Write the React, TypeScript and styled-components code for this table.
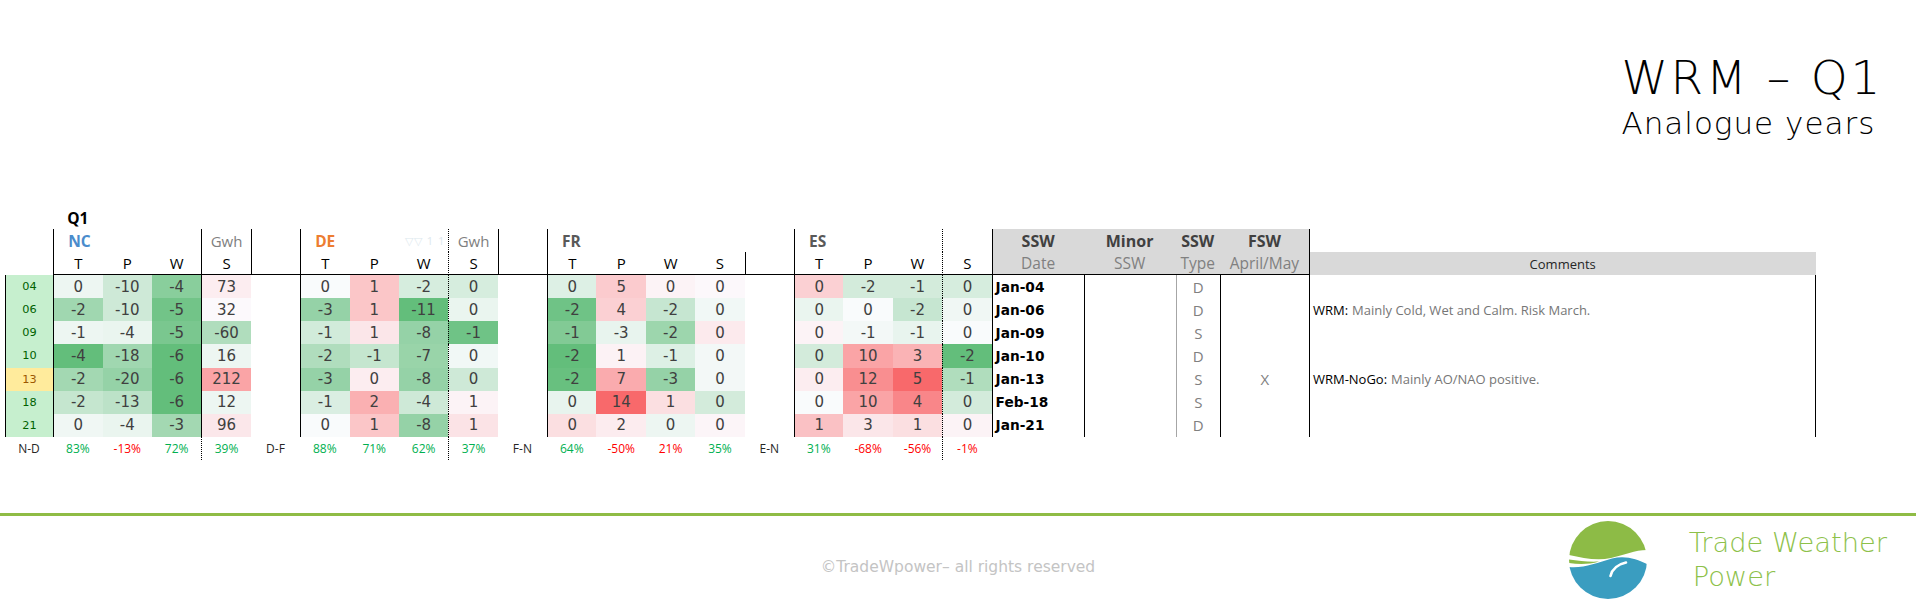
import styled, { createGlobalStyle } from "styled-components";

const GlobalStyle = createGlobalStyle`
  html, body {
    margin: 0;
    padding: 0;
    background: #ffffff;
  }
  body {
    font-family: "Open Sans", "Liberation Sans", sans-serif;
  }
`;

type Line = "solid" | "dotted" | "gray" | undefined;
type Zone = "q" | "h1" | "h2" | "d" | "p";

const GREEN = [99, 190, 123];
const WHITE = [252, 252, 255];
const RED = [248, 105, 107];

// negative = green scale, positive = red scale (Excel 3-colour scale look)
function heat(v: number) {
  const t = Math.min(Math.abs(v), 1);
  const to = v < 0 ? GREEN : RED;
  const c = WHITE.map((w, i) => Math.round(w + (to[i] - w) * t));
  return `rgb(${c.join(",")})`;
}

const lineCss = (l: Line) =>
  l === "solid"
    ? "1px solid #000"
    : l === "dotted"
    ? "1px dotted #000"
    : l === "gray"
    ? "1px solid #a6a6a6"
    : "none";

const countries = [
  {
    code: "NC",
    tone: "#4a8ccc",
    span: "N-D",
    gwh: true,
    values: [
      [0, -10, -4, 73],
      [-2, -10, -5, 32],
      [-1, -4, -5, -60],
      [-4, -18, -6, 16],
      [-2, -20, -6, 212],
      [-2, -13, -6, 12],
      [0, -4, -3, 96],
    ],
    heat: [
      [-0.1, -0.3, -0.75, 0.1],
      [-0.6, -0.3, -0.9, 0.02],
      [-0.1, -0.12, -0.85, -0.5],
      [-1, -0.6, -1, -0.1],
      [-0.58, -0.67, -1, 0.6],
      [-0.36, -0.42, -1, -0.1],
      [-0.08, -0.12, -0.58, 0.14],
    ],
    pct: ["83%", "-13%", "72%", "39%"],
    neg: [false, true, false, false],
  },
  {
    code: "DE",
    tone: "#ed7d31",
    span: "D-F",
    gwh: true,
    values: [
      [0, 1, -2, 0],
      [-3, 1, -11, 0],
      [-1, 1, -8, -1],
      [-2, -1, -7, 0],
      [-3, 0, -8, 0],
      [-1, 2, -4, 1],
      [0, 1, -8, 1],
    ],
    heat: [
      [-0.02, 0.37, -0.25, -0.25],
      [-0.67, 0.37, -1, -0.12],
      [-0.28, 0.15, -0.67, -0.92],
      [-0.5, -0.36, -0.65, -0.07],
      [-0.67, 0.1, -0.67, -0.3],
      [-0.22, 0.52, -0.3, 0.06],
      [-0.02, 0.37, -0.67, 0.17],
    ],
    pct: ["88%", "71%", "62%", "37%"],
    neg: [false, false, false, false],
  },
  {
    code: "FR",
    tone: "#595959",
    span: "F-N",
    gwh: false,
    values: [
      [0, 5, 0, 0],
      [-2, 4, -2, 0],
      [-1, -3, -2, 0],
      [-2, 1, -1, 0],
      [-2, 7, -3, 0],
      [0, 14, 1, 0],
      [0, 2, 0, 0],
    ],
    heat: [
      [-0.2, 0.33, 0.06, 0.03],
      [-0.92, 0.3, -0.35, -0.07],
      [-0.8, -0.13, -0.62, 0.12],
      [-1, 0.07, -0.2, -0.06],
      [-0.97, 0.55, -0.67, -0.06],
      [-0.13, 1, 0.2, -0.27],
      [0.2, 0.11, -0.1, 0.05],
    ],
    pct: ["64%", "-50%", "21%", "35%"],
    neg: [false, true, true, false],
  },
  {
    code: "ES",
    tone: "#595959",
    span: "E-N",
    gwh: false,
    values: [
      [0, -2, -1, 0],
      [0, 0, -2, 0],
      [0, -1, -1, 0],
      [0, 10, 3, -2],
      [0, 12, 5, -1],
      [0, 10, 4, 0],
      [1, 3, 1, 0],
    ],
    heat: [
      [0.3, -0.27, -0.27, -0.25],
      [-0.12, -0.02, -0.35, -0.08],
      [0.06, -0.06, -0.13, -0.02],
      [-0.27, 0.6, 0.5, -1],
      [0.1, 0.75, 1, -0.5],
      [-0.02, 0.6, 0.8, -0.27],
      [0.4, 0.15, 0.2, 0.06],
    ],
    pct: ["31%", "-68%", "-56%", "-1%"],
    neg: [false, true, true, true],
  },
];

const years = ["04", "06", "09", "10", "13", "18", "21"];
const dates = ["Jan-04", "Jan-06", "Jan-09", "Jan-10", "Jan-13", "Feb-18", "Jan-21"];
const types = ["D", "D", "S", "D", "S", "S", "D"];
const fsw = ["", "", "", "", "X", "", ""];
const comments: Record<number, [string, string]> = {
  1: ["WRM:", "Mainly Cold, Wet and Calm. Risk March."],
  4: ["WRM-NoGo:", "Mainly AO/NAO positive."],
};
const sswHead = [
  ["SSW", "Date"],
  ["Minor", "SSW"],
  ["SSW", "Type"],
  ["FSW", "April/May"],
];
const measures = ["T", "P", "W", "S"];

type Col =
  | { kind: "year" }
  | { kind: "val"; ci: number; mi: number }
  | { kind: "gap"; ci: number }
  | { kind: "ssw"; i: number }
  | { kind: "comment" };

const COLUMNS: Col[] = [
  { kind: "year" },
  ...countries.flatMap((_, ci) => [
    ...measures.map((__, mi) => ({ kind: "val" as const, ci, mi })),
    ...(ci < 3 ? [{ kind: "gap" as const, ci }] : []),
  ]),
  ...sswHead.map((_, i) => ({ kind: "ssw" as const, i })),
  { kind: "comment" },
];

function leftLine(col: number, zone: Zone): Line {
  const head = zone === "h1" || zone === "h2";
  const body = head || zone === "d";
  if (col === 0) return zone === "d" ? "solid" : undefined;
  if ([1, 6, 11, 16].includes(col)) return body ? "solid" : undefined;
  if (col === 4) return body ? "solid" : zone === "p" ? "dotted" : undefined;
  if (col === 9 || col === 19) return zone === "q" ? undefined : "dotted";
  if (col === 5 || col === 10) return head ? "solid" : undefined;
  if (col === 15) return zone === "h2" ? "solid" : undefined;
  if (col === 20 || col === 24) return body ? "solid" : undefined;
  if (col === 21 || col === 23) return zone === "d" ? "solid" : undefined;
  if (col === 22) return zone === "d" ? "gray" : undefined;
  return undefined;
}

const Page = styled.div`
  width: 1916px;
  height: 611px;
  overflow: hidden;
  display: flex;
  flex-direction: column;
`;

const TitleBar = styled.header`
  height: 206px;
  box-sizing: border-box;
  padding: 50px 33px 0 0;
  display: flex;
  justify-content: flex-end;
`;

const TitleBlock = styled.div`
  font-family: "DejaVu Sans", sans-serif;
  font-weight: 200;
  color: #000;
`;

const TitleMain = styled.div`
  font-size: 47px;
  line-height: 55px;
  letter-spacing: 2.7px;
`;

const TitleSub = styled.div`
  font-size: 31px;
  line-height: 36px;
  letter-spacing: 1px;
`;

const Sheet = styled.div`
  display: grid;
  grid-template-columns: 48.5px repeat(19, 49.4px) 92px 92px 44.3px 89px 506.6px;
  grid-template-rows: 23px 23px 23px repeat(7, 23.14px) 23px;
  margin-left: 4.7px;
`;

const Cell = styled.div<{ $left?: Line; $right?: Line; $under?: boolean; $fill?: string }>`
  box-sizing: border-box;
  min-width: 0;
  display: flex;
  align-items: center;
  justify-content: center;
  white-space: nowrap;
  border-left: ${(p) => lineCss(p.$left)};
  border-right: ${(p) => lineCss(p.$right)};
  border-bottom: ${(p) => (p.$under ? "1px solid #000" : "none")};
  background: ${(p) => p.$fill ?? "transparent"};
`;

const Label = styled(Cell)<{ $tone: string }>`
  justify-content: flex-start;
  padding-left: 14px;
  font-weight: 700;
  font-size: 15.5px;
  color: ${(p) => p.$tone};
`;

const Unit = styled(Cell)`
  font-size: 15px;
  color: #808080;
`;

const Ghost = styled(Cell)`
  justify-content: flex-end;
  padding-right: 3px;
  font-size: 11px;
  letter-spacing: 1px;
  color: #dde8ee;
`;

const Letter = styled(Cell)`
  font-size: 15px;
  color: #000;
`;

const Value = styled(Cell)`
  font-family: "DejaVu Sans", sans-serif;
  font-size: 15px;
  color: #404040;
`;

const Year = styled(Cell)<{ $neutral?: boolean }>`
  font-family: "DejaVu Sans", sans-serif;
  font-size: 11.3px;
  background: ${(p) => (p.$neutral ? "#ffeb9c" : "#c6efce")};
  color: ${(p) => (p.$neutral ? "#9c5700" : "#006100")};
`;

const Span = styled(Cell)`
  font-size: 12px;
  color: #262626;
`;

const Pct = styled(Cell)<{ $neg: boolean }>`
  font-size: 12px;
  color: ${(p) => (p.$neg ? "#ff0000" : "#00b050")};
`;

const SswHead = styled(Cell)<{ $sub?: boolean }>`
  background: #d9d9d9;
  font-size: ${(p) => (p.$sub ? "15.5px" : "16px")};
  font-weight: ${(p) => (p.$sub ? 400 : 700)};
  color: ${(p) => (p.$sub ? "#808080" : "#404040")};
`;

const CommentHead = styled(Cell)`
  background: #d9d9d9;
  font-size: 13px;
  color: #262626;
`;

const DateCell = styled(Cell)`
  justify-content: flex-start;
  padding-left: 3px;
  font-family: "DejaVu Sans", sans-serif;
  font-weight: 700;
  font-size: 13.7px;
  color: #000;
`;

const TypeCell = styled(Cell)`
  font-size: 15px;
  color: #808080;
`;

const Comment = styled(Cell)`
  justify-content: flex-start;
  padding-left: 3px;
  font-size: 13px;
  color: #767676;
  b {
    font-weight: 400;
    color: #000;
    margin-right: 4px;
  }
`;

const Footer = styled.footer`
  margin-top: 53px;
  border-top: 3px solid #8fbc45;
  height: 95px;
  display: grid;
  grid-template-columns: 1fr auto 1fr;
  align-items: center;
`;

const Copyright = styled.div`
  grid-column: 2;
  padding-top: 7px;
  font-family: "DejaVu Sans", sans-serif;
  font-size: 15.5px;
  color: #c4c4c4;
`;

const Brand = styled.div`
  grid-column: 3;
  justify-self: end;
  display: flex;
  align-items: center;
  gap: 42px;
  padding: 0 29px 6px 0;
`;

const BrandName = styled.div`
  font-family: "DejaVu Sans", sans-serif;
  font-weight: 200;
  font-size: 27.3px;
  line-height: 34px;
  color: #8dc14a;
  span {
    display: block;
    padding-left: 4px;
  }
`;

function Logo() {
  return (
    <svg width="78" height="78" viewBox="0 0 78 78">
      <defs>
        <clipPath id="twp-disc">
          <circle cx="39" cy="39" r="39" />
        </clipPath>
      </defs>
      <g clipPath="url(#twp-disc)">
        <rect width="78" height="78" fill="#ffffff" />
        <path d="M0 0 H78 V29 C66 29 55 34 42 37 C28 40 14 37 0 34 Z" fill="#8dbb46" />
        <path d="M0 38.5 C10 40 20 41 30 40.5 C20 43.5 10 43.5 0 42 Z" fill="#8dbb46" />
        <path d="M0 46 C14 47.5 28 42 43 37.5 C56 34 68 38 78 43 V78 H0 Z" fill="#3a9dc0" />
        <path
          d="M41.5 55 C43 48.5 48 43.5 57 41.5"
          stroke="#ffffff"
          strokeWidth="2.6"
          strokeLinecap="round"
          fill="none"
        />
      </g>
    </svg>
  );
}

function renderCell(zone: Zone, r: number, c: number) {
  const col = COLUMNS[c];
  const key = `${zone}-${r}-${c}`;
  const left = leftLine(c, zone);
  const under = zone === "h2" && c >= 1 && c <= 23;
  const right: Line = col.kind === "comment" && zone === "d" ? "solid" : undefined;

  if (zone === "q") {
    if (c === 1) return <Label key={key} $tone="#000">Q1</Label>;
    return <Cell key={key} />;
  }

  if (zone === "h1") {
    if (col.kind === "val") {
      const ct = countries[col.ci];
      if (col.mi === 0)
        return (
          <Label key={key} $left={left} $tone={ct.tone}>
            {ct.code}
          </Label>
        );
      if (col.mi === 3 && ct.gwh)
        return (
          <Unit key={key} $left={left}>
            Gwh
          </Unit>
        );
      if (col.mi === 2 && col.ci === 1)
        return (
          <Ghost key={key} $left={left}>
            ▽▽ 1 1
          </Ghost>
        );
    }
    if (col.kind === "ssw")
      return (
        <SswHead key={key} $left={left}>
          {sswHead[col.i][0]}
        </SswHead>
      );
    return <Cell key={key} $left={left} />;
  }

  if (zone === "h2") {
    if (col.kind === "val")
      return (
        <Letter key={key} $left={left} $under={under}>
          {measures[col.mi]}
        </Letter>
      );
    if (col.kind === "ssw")
      return (
        <SswHead key={key} $sub $left={left} $under={under}>
          {sswHead[col.i][1]}
        </SswHead>
      );
    if (col.kind === "comment")
      return (
        <CommentHead key={key} $left={left}>
          Comments
        </CommentHead>
      );
    return <Cell key={key} $left={left} $under={under} />;
  }

  if (zone === "d") {
    if (col.kind === "year")
      return (
        <Year key={key} $left={left} $neutral={years[r] === "13"}>
          {years[r]}
        </Year>
      );
    if (col.kind === "val") {
      const ct = countries[col.ci];
      return (
        <Value key={key} $left={left} $fill={heat(ct.heat[r][col.mi])}>
          {ct.values[r][col.mi]}
        </Value>
      );
    }
    if (col.kind === "ssw") {
      if (col.i === 0)
        return (
          <DateCell key={key} $left={left}>
            {dates[r]}
          </DateCell>
        );
      if (col.i === 2)
        return (
          <TypeCell key={key} $left={left}>
            {types[r]}
          </TypeCell>
        );
      if (col.i === 3)
        return (
          <TypeCell key={key} $left={left}>
            {fsw[r]}
          </TypeCell>
        );
      return <Cell key={key} $left={left} />;
    }
    if (col.kind === "comment") {
      const note = comments[r];
      return (
        <Comment key={key} $left={left} $right={right}>
          {note && (
            <>
              <b>{note[0]}</b>
              {note[1]}
            </>
          )}
        </Comment>
      );
    }
    return <Cell key={key} $left={left} />;
  }

  // percentage row
  if (col.kind === "year")
    return (
      <Span key={key} $left={left}>
        {countries[0].span}
      </Span>
    );
  if (col.kind === "gap")
    return (
      <Span key={key} $left={left}>
        {countries[col.ci + 1].span}
      </Span>
    );
  if (col.kind === "val") {
    const ct = countries[col.ci];
    return (
      <Pct key={key} $left={left} $neg={ct.neg[col.mi]}>
        {ct.pct[col.mi]}
      </Pct>
    );
  }
  return <Cell key={key} $left={left} />;
}

const zones: [Zone, number][] = [
  ["q", 0],
  ["h1", 0],
  ["h2", 0],
  ...years.map((_, i) => ["d", i] as [Zone, number]),
  ["p", 0],
];

export default function App() {
  return (
    <>
      <GlobalStyle />
      <Page>
        <TitleBar>
          <TitleBlock>
            <TitleMain>WRM – Q1</TitleMain>
            <TitleSub>Analogue years</TitleSub>
          </TitleBlock>
        </TitleBar>
        <Sheet>
          {zones.map(([zone, r]) => COLUMNS.map((_, c) => renderCell(zone, r, c)))}
        </Sheet>
        <Footer>
          <Copyright>©TradeWpower– all rights reserved</Copyright>
          <Brand>
            <Logo />
            <BrandName>
              Trade Weather
              <span>Power</span>
            </BrandName>
          </Brand>
        </Footer>
      </Page>
    </>
  );
}
